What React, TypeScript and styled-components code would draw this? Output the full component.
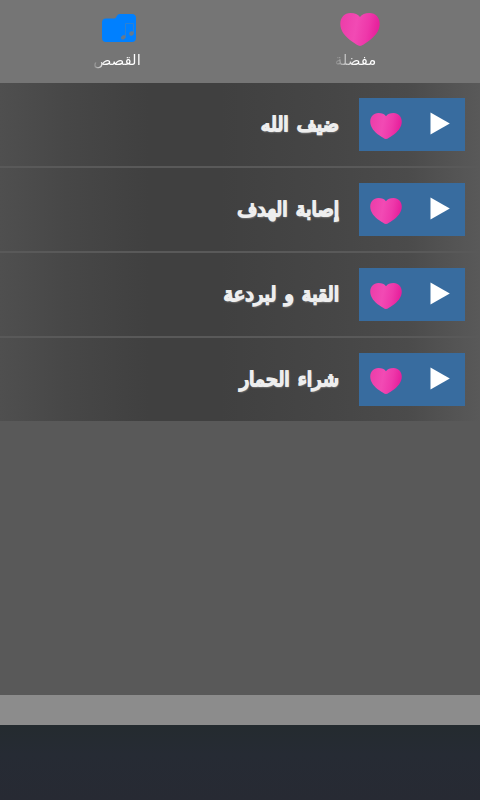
import styled, { createGlobalStyle } from "styled-components";
import { useState } from "react";

const GlobalStyle = createGlobalStyle`
  * {
    box-sizing: border-box;
  }

  body {
    margin: 0;
    background: #595959;
  }
`;

const AppContainer = styled.div`
  display: flex;
  flex-direction: column;
  width: 100%;
  height: 100vh;
  overflow: hidden;
  direction: rtl;
  background: #595959;
  color: #ffffff;
  font-family: "DejaVu Sans", sans-serif;
`;

const TabBar = styled.nav`
  display: flex;
  height: 83px;
  flex-shrink: 0;
  background: #757575;
`;

const Tab = styled.button`
  flex: 1;
  display: flex;
  flex-direction: column;
  align-items: center;
  padding: 8px 0 0;
  border: 0;
  background: none;
  color: inherit;
  font: inherit;
  cursor: pointer;
`;

const TabIcon = styled.span<{ $shift?: number; $lift?: number }>`
  display: flex;
  align-items: center;
  justify-content: center;
  height: 42px;
  padding-bottom: ${(props) => props.$lift || 0}px;
  margin-right: ${(props) => props.$shift || 0}px;
`;

const TabLabel = styled.span<{ $shift: number; $fade: number }>`
  margin-right: ${(props) => props.$shift}px;
  font-size: 15px;
  line-height: 20px;
  white-space: nowrap;
  color: transparent;
  background: linear-gradient(
    to left,
    #ffffff calc(100% - ${(props) => props.$fade}px),
    #858585
  );
  background-clip: text;
  -webkit-background-clip: text;
`;

const StoryList = styled.main`
  flex: 1;
  display: flex;
  flex-direction: column;
  gap: 2px;
`;

const StoryRow = styled.div`
  display: flex;
  align-items: center;
  height: 83px;
  padding: 0 15px;
  background: linear-gradient(
    to right,
    #4f4f4f 0%,
    #474747 14%,
    #404040 31%,
    #404040 46%,
    #464646 70%,
    #4b4b4b 85%,
    #595959 100%
  );
`;

const Controls = styled.div`
  display: flex;
  width: 106px;
  height: 53px;
  background: #386c9f;
`;

const ControlButton = styled.button`
  display: flex;
  align-items: center;
  justify-content: center;
  width: 53px;
  height: 53px;
  padding: 0;
  border: 0;
  background: none;
  cursor: pointer;
`;

const StoryTitle = styled.span`
  margin-right: 20px;
  padding-top: 1px;
  font-size: 19.3px;
  line-height: 28px;
  word-spacing: 2px;
  white-space: nowrap;
  color: #eeeeee;
  -webkit-text-stroke: 1.8px #eeeeee;
  text-shadow: 0.5px 0.5px 2px #cccccc;
`;

const StatusStrip = styled.div`
  height: 30px;
  flex-shrink: 0;
  background: #8c8c8c;
`;

const BottomBar = styled.footer`
  height: 75px;
  flex-shrink: 0;
  background: linear-gradient(#242b2f, #262b34 40%, #272a33);
`;

const HeartIcon = ({ id, width, height }: { id: string; width: number; height: number }) => (
  <svg width={width} height={height} viewBox="0 0 40 33" preserveAspectRatio="none">
    <defs>
      <linearGradient id={id} x1="0" x2="1" y1="0" y2="0.15">
        <stop offset="0" stopColor="#ec3ca8" />
        <stop offset="0.45" stopColor="#f24ab4" />
        <stop offset="0.75" stopColor="#ee38aa" />
        <stop offset="1" stopColor="#e7209c" />
      </linearGradient>
    </defs>
    <path
      d="M20 33C18 33 15 30.500 12 28.500C5.500 24 0.300 18 0.300 11C0.300 4.500 4.500 0 10.500 0C15 0 18 1.300 20 4C22 1.300 25 0 29.500 0C35.500 0 39.700 4.500 39.700 11C39.700 18 34.500 24 28 28.500C25 30.500 22 33 20 33Z"
      fill={`url(#${id})`}
    />
  </svg>
);

const FolderIcon = () => (
  <svg width="34" height="28" viewBox="0 0 34 28">
    <path
      d="M4 4.500H12.500C15 4.500 14 0 18 0H30C32.500 0 34 1.500 34 4V24C34 26.500 32.500 28 30 28H4C1.500 28 0 26.500 0 24V8.500C0 6 1.500 4.500 4 4.500Z"
      fill="#0080ff"
    />
    <path d="M23.500 23.500V9.500H31.500V19.500" fill="none" stroke="#3480cc" strokeWidth="0.900" />
    <ellipse cx="21.300" cy="23.300" rx="2.500" ry="2" fill="#66798d" transform="rotate(-35 21.300 23.300)" />
    <ellipse cx="29.500" cy="19.500" rx="2.400" ry="2.100" fill="#66798d" transform="rotate(-25 29.500 19.500)" />
  </svg>
);

const PlayIcon = () => (
  <svg width="20" height="23" viewBox="0 0 20 23">
    <path d="M0.500 0.500L19.800 11.500L0.500 22.500Z" fill="#ffffff" />
  </svg>
);

const HeartSlot = styled.span`
  display: flex;
  padding: 2px 0 0 1px;
`;

const PlaySlot = styled.span`
  display: flex;
  padding: 0 0 3px 2px;
`;

const stories = ["ضيف الله", "إصابة الهدف", "القبة و لبردعة", "شراء الحمار"];

function App() {
  const [, setActiveTab] = useState("stories");

  return (
    <>
      <GlobalStyle />
      <AppContainer>
        <TabBar>
          <Tab onClick={() => setActiveTab("favorites")}>
            <TabIcon>
              <HeartIcon id="tab-heart" width={40} height={33} />
            </TabIcon>
            <TabLabel $shift={9} $fade={20}>مفضلة</TabLabel>
          </Tab>
          <Tab onClick={() => setActiveTab("stories")}>
            <TabIcon $shift={3} $lift={2}>
              <FolderIcon />
            </TabIcon>
            <TabLabel $shift={6} $fade={12}>القصص</TabLabel>
          </Tab>
        </TabBar>
        <StoryList>
          {stories.map((title, index) => (
            <StoryRow key={title}>
              <Controls>
                <ControlButton aria-label="تشغيل">
                  <PlaySlot>
                    <PlayIcon />
                  </PlaySlot>
                </ControlButton>
                <ControlButton aria-label="مفضلة">
                  <HeartSlot>
                    <HeartIcon id={`heart-${index}`} width={32} height={26} />
                  </HeartSlot>
                </ControlButton>
              </Controls>
              <StoryTitle>{title}</StoryTitle>
            </StoryRow>
          ))}
        </StoryList>
        <StatusStrip />
        <BottomBar />
      </AppContainer>
    </>
  );
}

export default App;
